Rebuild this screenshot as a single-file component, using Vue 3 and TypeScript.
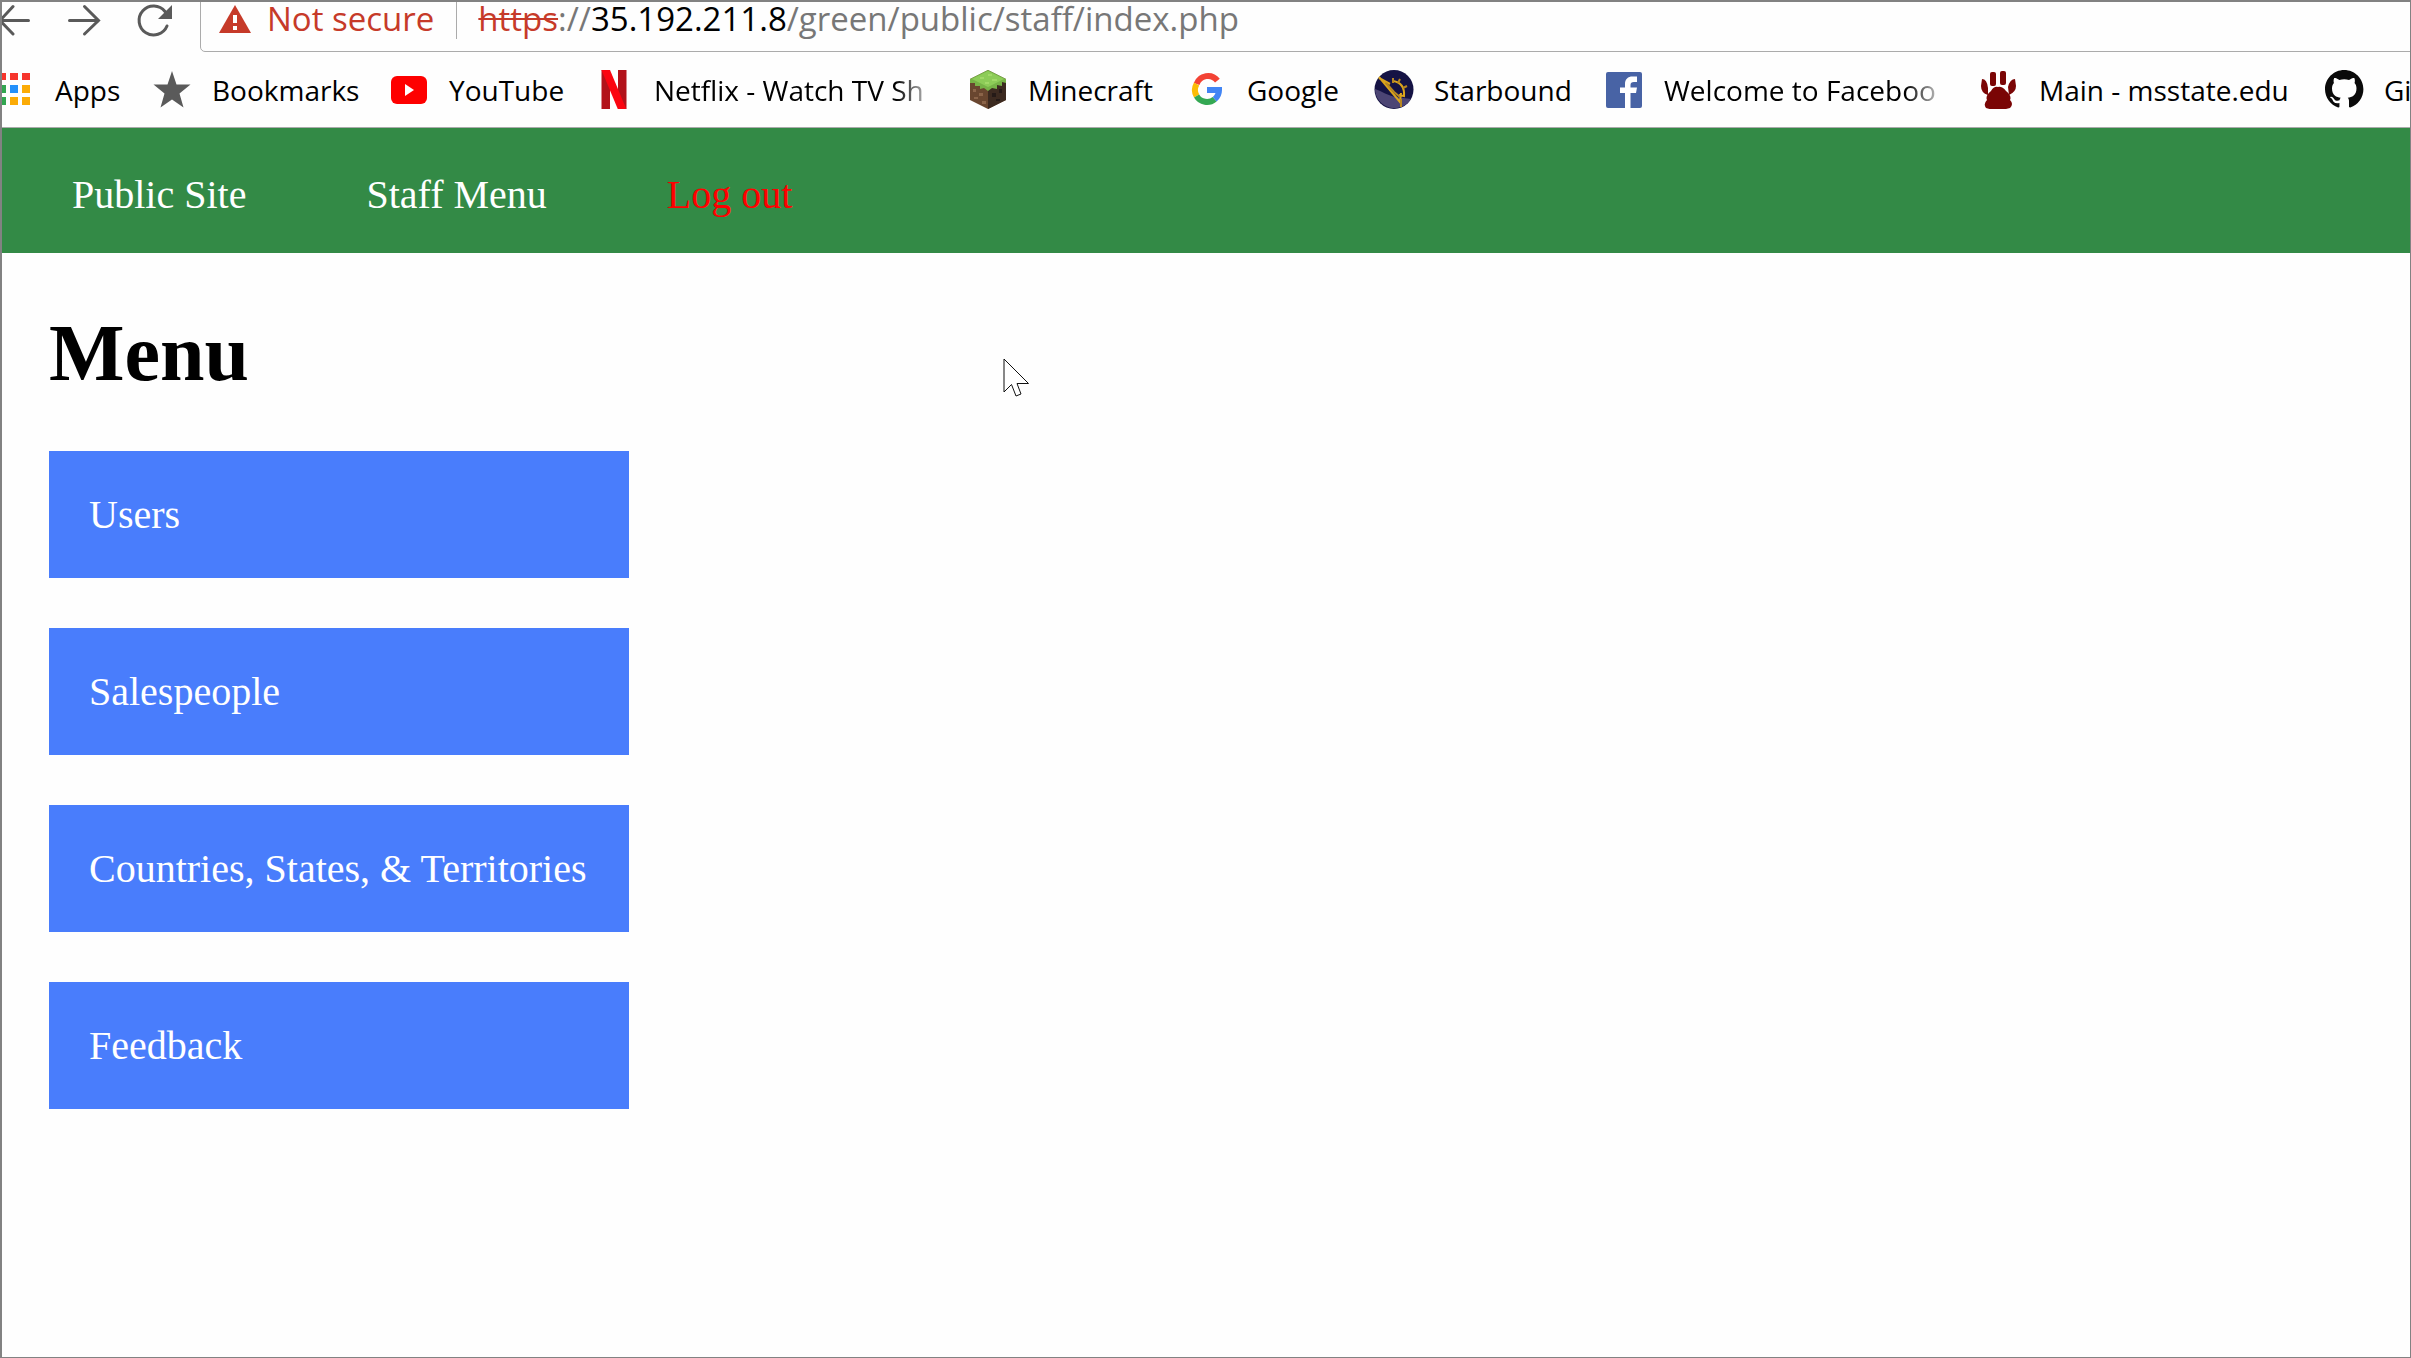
<script setup lang="ts">
interface Bookmark {
  icon: string
  label: string
  href: string
  faded?: boolean
}

interface MenuLink {
  label: string
  href: string
}

const bookmarks: Bookmark[] = [
  { icon: 'apps', label: 'Apps', href: '#apps' },
  { icon: 'star', label: 'Bookmarks', href: '#bookmarks' },
  { icon: 'youtube', label: 'YouTube', href: '#youtube' },
  { icon: 'netflix', label: 'Netflix - Watch TV Sh', href: '#netflix', faded: true },
  { icon: 'minecraft', label: 'Minecraft', href: '#minecraft' },
  { icon: 'google', label: 'Google', href: '#google' },
  { icon: 'starbound', label: 'Starbound', href: '#starbound' },
  { icon: 'facebook', label: 'Welcome to Faceboo', href: '#facebook', faded: true },
  { icon: 'paw', label: 'Main - msstate.edu', href: '#msstate' },
  { icon: 'github', label: 'Gi', href: '#github' },
]

const menu: MenuLink[] = [
  { label: 'Users', href: '#users' },
  { label: 'Salespeople', href: '#salespeople' },
  { label: 'Countries, States, & Territories', href: '#countries' },
  { label: 'Feedback', href: '#feedback' },
]
</script>

<template>
  <div class="window">
    <div class="toolbar">
      <button type="button" class="tool" aria-label="Back">
        <svg viewBox="0 0 40 40" fill="none" stroke="#5a5a5a" stroke-width="3" stroke-linecap="round">
          <path d="M7 19.500H34.500M19 5.500L6 19.500L19 33" />
        </svg>
      </button>
      <button type="button" class="tool" aria-label="Forward">
        <svg viewBox="0 0 40 40" fill="none" stroke="#5a5a5a" stroke-width="3" stroke-linecap="round">
          <path d="M5.500 19.500H34M20.500 5.500L34.500 19.500L20.500 33" />
        </svg>
      </button>
      <button type="button" class="tool" aria-label="Reload">
        <svg viewBox="0 0 40 40">
          <path d="M33 25A14.500 14.500 0 1 1 31 10.500" fill="none" stroke="#5a5a5a" stroke-width="3" stroke-linecap="round" />
          <path d="M38 4V18H24Z" fill="#5a5a5a" />
        </svg>
      </button>
      <div class="address">
        <svg class="warn" viewBox="0 0 32 28">
          <path d="M16 0L32 28H0Z" fill="#c63a29" />
          <path d="M14 10h4v8h-4zM14 21h4v4h-4z" fill="#fefefe" />
        </svg>
        <span class="secure">Not secure</span>
        <span class="divider"></span>
        <span class="url"><s>https</s>://<b>35.192.211.8</b>/green/public/staff/index.php</span>
      </div>
    </div>

    <nav class="bookmarks" aria-label="Bookmarks">
      <a v-for="b in bookmarks" :key="b.icon" :href="b.href" class="bookmark">
        <svg viewBox="0 0 40 40" class="favicon" aria-hidden="true">
          <g v-if="b.icon === 'apps'">
            <path d="M3 4h8v7H3zM15 4h8v7h-8zM27 4h8v7h-8z" fill="#f6352c" />
            <path d="M3 16h8v8H3zM3 28h8v8H3z" fill="#31a650" />
            <path d="M15 16h8v8h-8z" fill="#2390fb" />
            <path d="M27 16h8v8h-8zM15 28h8v8h-8zM27 28h8v8h-8z" fill="#fbab06" />
          </g>
          <path v-else-if="b.icon === 'star'" d="M20 2L24.500 15.500L38.500 15.500L27.500 24.500L31.500 38.500L20 30.500L8.500 38.500L12.500 24.500L1.500 15.500L15.500 15.500Z" fill="#5a5a5a" />
          <g v-else-if="b.icon === 'youtube'">
            <rect x="2" y="7" width="36" height="28" rx="6" fill="#fe0000" />
            <path d="M16 15L25 21L16 27Z" fill="#fff" />
          </g>
          <g v-else-if="b.icon === 'netflix'">
            <path d="M7.500 1H16V40.500H7.500zM24 1H32.500V40.500H24z" fill="#b2121a" />
            <path d="M7.500 1H16L32.500 40.500H24Z" fill="#fb0510" />
          </g>
          <g v-else-if="b.icon === 'minecraft'">
            <path d="M20 1L38 10V31L20 40L2 31V10Z" fill="#69462f" />
            <path d="M20 20L38 11V31L20 40Z" fill="#3c2a20" />
            <path d="M2 10L20 1L38 10V14L34 13V17L29 16V20L24 19L20 22L16 19L12 20V17L7 17V14L2 14Z" fill="#77b347" />
            <path d="M4 10L20 2L36 10L20 18Z" fill="#8dcc58" />
            <path d="M12 8h4v2h-4zM20 5h4v2h-4zM24 10h5v2h-5zM17 13h4v2h-4z" fill="#a1d968" />
            <path d="M5 20h3v3H5zM11 24h4v3h-4zM6 28h4v2H6zM14 32h4v3h-4z" fill="#8b6449" />
            <path d="M24 24h4v4h-4zM31 20h3v4h-3zM28 30h4v2h-4z" fill="#251a17" />
          </g>
          <g v-else-if="b.icon === 'google'" fill="none" stroke-width="6">
            <path d="M30.400 11.600A12 12 0 0 0 9.600 15" stroke="#f34335" />
            <path d="M9.600 15A12 12 0 0 0 9.600 27" stroke="#fbbc05" />
            <path d="M9.600 27A12 12 0 0 0 27.700 30.200" stroke="#34a853" />
            <path d="M27.700 30.200A12 12 0 0 0 32 21H20" stroke="#4285f4" />
          </g>
          <g v-else-if="b.icon === 'starbound'">
            <circle cx="20" cy="20.500" r="19.500" fill="#151344" />
            <path d="M1 20C8 22 14 27 22 28L37 30A19.500 19.500 0 0 1 1 20Z" fill="#4c4574" />
            <path d="M5 8L26 33L27 24M5 9L16 15M19 12Q31 14 30 27L25 26" fill="none" stroke="#dba51c" stroke-width="2" />
            <path d="M12 14L20 23L26 28M19 9V14M26 10L24 14M33 17L29 19M27 30V38" fill="none" stroke="#b88720" stroke-width="2" />
          </g>
          <g v-else-if="b.icon === 'facebook'">
            <rect x="2" y="3" width="36" height="36" rx="2" fill="#4863a5" />
            <path d="M21 39V24H16V18.500H21V15C21 10 24 7.500 28.500 7.500H33V13H30C27.500 13 26.500 14 26.500 16V18.500H33L32 24H26.500V39Z" fill="#fff" />
          </g>
          <g v-else-if="b.icon === 'paw'" fill="#7a0505">
            <rect x="11" y="3" width="6" height="14" rx="2" />
            <rect x="21" y="2" width="6" height="14" rx="2" />
            <path d="M3 10Q8 10 9 19L9 26Q2 24 2 17ZM36 10Q31 10 29 18L30 26Q37 23 37 17Z" />
            <path d="M19 18Q23 17 27 22Q33 27 31 31Q35 35 31 39Q25 41 19 40Q12 41 7 39Q4 35 8 31Q6 27 12 22Q15 17 19 18Z" />
          </g>
          <path v-else transform="translate(1 1) scale(2.400)" fill="#0a0a0a" d="M8 0C3.580 0 0 3.580 0 8c0 3.540 2.290 6.530 5.470 7.590.4.070.55-.17.55-.38 0-.19-.01-.82-.01-1.490-2.010.37-2.530-.49-2.690-.94-.09-.23-.48-.94-.82-1.130-.28-.15-.68-.52-.01-.53.63-.01 1.080.58 1.230.82.72 1.210 1.870.87 2.330.66.07-.52.28-.87.51-1.070-1.780-.2-3.640-.89-3.640-3.950 0-.87.31-1.590.82-2.150-.08-.2-.36-1.020.08-2.120 0 0 .67-.21 2.200.82.64-.18 1.320-.27 2-.27s1.360.09 2 .27c1.530-1.040 2.200-.82 2.200-.82.44 1.100.16 1.920.08 2.120.51.56.82 1.270.82 2.150 0 3.070-1.870 3.750-3.650 3.950.29.25.54.73.54 1.480 0 1.070-.01 1.930-.01 2.200 0 .21.15.46.55.38A8.010 8.010 0 0 0 16 8c0-4.420-3.580-8-8-8z" />
        </svg>
        <span class="label" :class="{ faded: b.faded }">{{ b.label }}</span>
      </a>
    </nav>

    <nav class="site-nav" aria-label="Site">
      <a href="#public">Public Site</a>
      <a href="#staff">Staff Menu</a>
      <a href="#logout" class="logout">Log out</a>
    </nav>

    <main>
      <h1>Menu</h1>
      <ul class="menu">
        <li v-for="m in menu" :key="m.label">
          <a :href="m.href">{{ m.label }}</a>
        </li>
      </ul>
    </main>

    <svg class="pointer" viewBox="0 0 28 40" aria-hidden="true">
      <path d="M1 1V34L8.500 26.500L13 38L18 36L14 25.500H25.500Z" fill="#fff" stroke="#111" stroke-width="1" />
    </svg>
  </div>
</template>

<style>
body {
  margin: 0;
}
</style>

<style scoped>
.window {
  position: relative;
  box-sizing: border-box;
  min-height: 100vh;
  overflow: hidden;
  border: 1px solid #828282;
  border-top: 2px solid #828282;
  border-left: 2px solid #828282;
  background: #fefefe;
  font-family: "Liberation Serif", serif;
  font-size: 40px;
  line-height: 47px;
}

a {
  color: inherit;
  text-decoration: none;
}

.toolbar {
  display: flex;
  align-items: center;
  gap: 30px;
  margin: -12px -8px 0;
  font: 33px/44px "Open Sans", sans-serif;
}

.tool {
  flex: none;
  width: 40px;
  height: 40px;
  padding: 0;
  border: 0;
  background: none;
}

.tool svg {
  display: block;
  width: 40px;
  height: 40px;
}

.address {
  flex: 1;
  display: flex;
  align-items: center;
  margin-left: -4px;
  padding: 6px 18px 10px;
  border: 1px solid #ababab;
  border-radius: 5px;
  white-space: nowrap;
}

.warn {
  width: 32px;
  height: 28px;
}

.secure {
  margin-left: 16px;
  color: #c63a29;
}

.divider {
  width: 1px;
  height: 40px;
  margin: 0 21px 0 22px;
  background: #ababab;
}

.url {
  color: #777;
}

.url s {
  color: #c63a29;
  text-decoration-thickness: 2px;
}

.url b {
  color: #000;
  font-weight: 400;
}

.bookmarks {
  display: grid;
  grid-template-columns: 157px 237px 205px 374px 219px 187px 230px 375px 345px 1fr;
  margin-left: -7px;
  padding: 17px 0 16px;
  border-bottom: 1px solid #ababab;
  color: #000;
  font: 28px/42px "Open Sans", sans-serif;
}

.bookmark {
  display: flex;
  gap: 20px;
  min-width: 0;
  white-space: nowrap;
}

.favicon {
  flex: none;
  width: 40px;
  height: 40px;
}

.faded {
  width: 284px;
  overflow: hidden;
  mask-image: linear-gradient(to right, #000 85%, transparent);
}

.site-nav {
  display: flex;
  gap: 120px;
  padding: 43px 70px 35px;
  background: #338a46;
  color: #fff;
}

.logout {
  color: #f00;
}

main {
  padding: 54px 47px;
}

h1 {
  margin: 0 0 52px;
  font-size: 80px;
  line-height: 92px;
}

.menu {
  display: flex;
  flex-direction: column;
  gap: 50px;
  width: 580px;
  margin: 0;
  padding: 0;
  list-style: none;
}

.menu a {
  display: block;
  padding: 40px;
  background: #497dfc;
  color: #fff;
  white-space: nowrap;
}

.pointer {
  position: absolute;
  top: 356px;
  left: 1001px;
  width: 28px;
  height: 40px;
}
</style>
